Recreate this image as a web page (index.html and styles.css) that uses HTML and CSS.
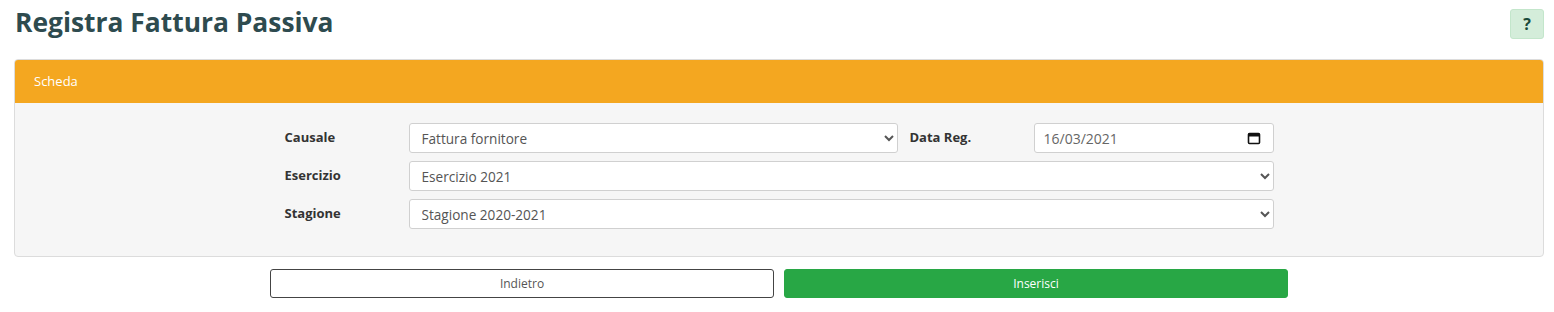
FILE: index.html
```html
<!DOCTYPE html>
<html lang="it">
<head>
  <meta charset="UTF-8" />
  <title>Registra Fattura Passiva</title>
  <link rel="stylesheet" href="styles.css">
</head>
<body>

  <div class="page-head">
    <h1>Registra Fattura Passiva</h1>
    <a href="#" class="help-btn">?</a>
  </div>

  <div class="card">
    <div class="card-header">Scheda</div>
    <div class="card-body">
      <form class="form-grid">
        <label for="causale">Causale</label>
        <select id="causale" class="field">
          <option>Fattura fornitore</option>
        </select>
        <label class="label-data">Data Reg.</label>
        <div class="field date-field">
          <span>16/03/2021</span>
          <svg width="14" height="14" viewBox="0 0 14 14">
            <rect x="1.5" y="2.5" width="11" height="10" rx="1" fill="none" stroke="#111" stroke-width="1.6"/>
            <rect x="1.5" y="2.5" width="11" height="3" fill="#111"/>
          </svg>
        </div>

        <label for="esercizio">Esercizio</label>
        <select id="esercizio" class="field wide">
          <option>Esercizio 2021</option>
        </select>

        <label for="stagione">Stagione</label>
        <select id="stagione" class="field wide">
          <option>Stagione 2020-2021</option>
        </select>
      </form>
    </div>
  </div>

  <div class="actions">
    <button type="button" class="btn btn-back">Indietro</button>
    <button type="button" class="btn btn-save">Inserisci</button>
  </div>

</body>
</html>
```

FILE: styles.css
```css
body {
  font-family: "Open Sans", Arial, sans-serif;
  background: #fff;
  color: #333;
  margin: 0;
  padding: 0 10px 0 14px;
}

.page-head {
  display: flex;
  justify-content: space-between;
  align-items: flex-start;
  height: 59px;
}

h1 {
  margin: 4px 0 0 1px;
  font-size: 26.4px;
  font-weight: bold;
  color: #2e4b4f;
  line-height: 36px;
}

.help-btn {
  margin-top: 9px;
  width: 34px;
  height: 30px;
  box-sizing: border-box;
  display: flex;
  align-items: center;
  justify-content: center;
  background: #d4edda;
  border: 1px solid #c3e6cb;
  border-radius: 3px;
  color: #1a4a3a;
  font-weight: bold;
  font-size: 16px;
  text-decoration: none;
}

.card {
  border: 1px solid #dcdcdc;
  border-radius: 4px;
  overflow: hidden;
  background: #f6f6f6;
}

.card-header {
  background: #f4a720;
  color: #fff;
  font-size: 13px;
  height: 43px;
  line-height: 43px;
  padding-left: 19px;
}

.card-body {
  padding: 20px 0 27px;
}

.form-grid {
  width: 989px;
  margin: 0 auto;
  display: grid;
  grid-template-columns: 124px 489px 12px 124px 240px;
  grid-auto-rows: 30px;
  row-gap: 8px;
}

.form-grid label {
  font-size: 13px;
  font-weight: bold;
  color: #333;
  padding-top: 5px;
}

.form-grid .label-data {
  grid-column: 4;
}

.field {
  box-sizing: border-box;
  height: 30px;
  border: 1px solid #d0d0d0;
  border-radius: 3px;
  background: #fff;
  font-family: "Open Sans", Arial, sans-serif;
  font-size: 13.6px;
  color: #555;
  padding: 0 8px;
}

.wide {
  grid-column: 2 / 6;
}

.date-field {
  grid-column: 5;
  display: flex;
  align-items: center;
  justify-content: space-between;
  padding: 0 12px 0 9px;
  font-size: 14px;
  color: #666;
}

.actions {
  display: flex;
  justify-content: center;
  gap: 10px;
  margin-top: 12px;
}

.btn {
  width: 504px;
  height: 29px;
  border-radius: 3px;
  font-family: "Open Sans", Arial, sans-serif;
  font-size: 12px;
  cursor: pointer;
}

.btn-back {
  background: #fff;
  border: 1px solid #444;
  color: #555;
}

.btn-save {
  background: #28a745;
  border: 1px solid #28a745;
  color: #fff;
}
```
